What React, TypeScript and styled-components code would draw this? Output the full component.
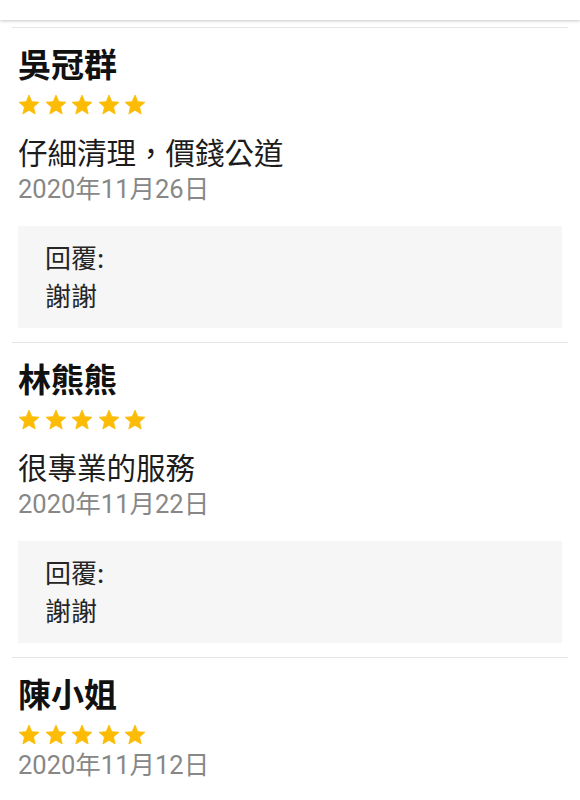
import React from "react";
import styled, { createGlobalStyle } from "styled-components";

const GlobalStyle = createGlobalStyle`
  html, body {
    margin: 0;
    padding: 0;
    background: #ffffff;
  }
  body {
    font-family: Roboto, "Noto Sans CJK TC", sans-serif;
  }
`;

const colors = {
  name: "#111111",
  text: "#1c1c1c",
  date: "#878787",
  star: "#fcbc05",
  line: "#e6e6e6",
  replyBg: "#f6f6f6",
};

const Page = styled.div`
  width: 580px;
  height: 800px;
  overflow: hidden;
  background: #fff;
`;

const TopBar = styled.div`
  height: 20px;
  background: #fff;
  box-shadow: 0 1px 3px rgba(0, 0, 0, 0.22);
  position: relative;
  z-index: 1;
`;

const List = styled.div`
  margin: 7px 12px 0;
`;

const Item = styled.div`
  border-top: 1px solid ${colors.line};
  padding: 15px 6px 14px;
`;

const Name = styled.div`
  font-family: "Noto Sans CJK TC", sans-serif;
  font-weight: 700;
  font-size: 33px;
  line-height: 40px;
  color: ${colors.name};
`;

const Stars = styled.div`
  display: flex;
  gap: 2.5px;
  margin-top: 10px;
  margin-left: -1px;
  height: 24px;
`;

const Comment = styled.div`
  font-family: "Noto Sans CJK TC", sans-serif;
  font-size: 29.5px;
  line-height: 40px;
  color: ${colors.text};
  margin-top: 14px;
`;

const DateText = styled.div`
  font-family: Roboto, "Noto Sans CJK TC", sans-serif;
  font-size: 25.5px;
  line-height: 32px;
  color: ${colors.date};
  margin-top: 2px;
`;

const ReplyBox = styled.div`
  background: ${colors.replyBg};
  margin-top: 21px;
  padding: 12px 27px 14px;
  font-family: "Noto Sans CJK TC", sans-serif;
  font-size: 26px;
  line-height: 38px;
  color: #262626;
`;

const Star = () => (
  <svg width="24" height="24" viewBox="0 0 24 24" fill={colors.star}>
    <path
      d="M12 17.27L18.18 21l-1.64-7.03L22 9.24l-7.19-.61L12 2 9.19 8.63 2 9.24l5.46 4.73L5.82 21z"
      strokeLinejoin="round"
      stroke={colors.star}
      strokeWidth="0.8"
    />
  </svg>
);

interface Review {
  name: string;
  rating: number;
  comment?: string;
  date: string;
  reply?: string;
}

const reviews: Review[] = [
  { name: "吳冠群", rating: 5, comment: "仔細清理，價錢公道", date: "2020年11月26日", reply: "謝謝" },
  { name: "林熊熊", rating: 5, comment: "很專業的服務", date: "2020年11月22日", reply: "謝謝" },
  { name: "陳小姐", rating: 5, date: "2020年11月12日" },
];

const ReviewItem = ({ review }: { review: Review }) => (
  <Item>
    <Name>{review.name}</Name>
    <Stars>
      {Array.from({ length: review.rating }).map((_, i) => (
        <Star key={i} />
      ))}
    </Stars>
    {review.comment && <Comment>{review.comment}</Comment>}
    <DateText>{review.date}</DateText>
    {review.reply && (
      <ReplyBox>
        <div>回覆:</div>
        <div>{review.reply}</div>
      </ReplyBox>
    )}
  </Item>
);

const App = () => (
  <Page>
    <GlobalStyle />
    <TopBar />
    <List>
      {reviews.map((r) => (
        <ReviewItem key={r.name} review={r} />
      ))}
    </List>
  </Page>
);

export default App;
